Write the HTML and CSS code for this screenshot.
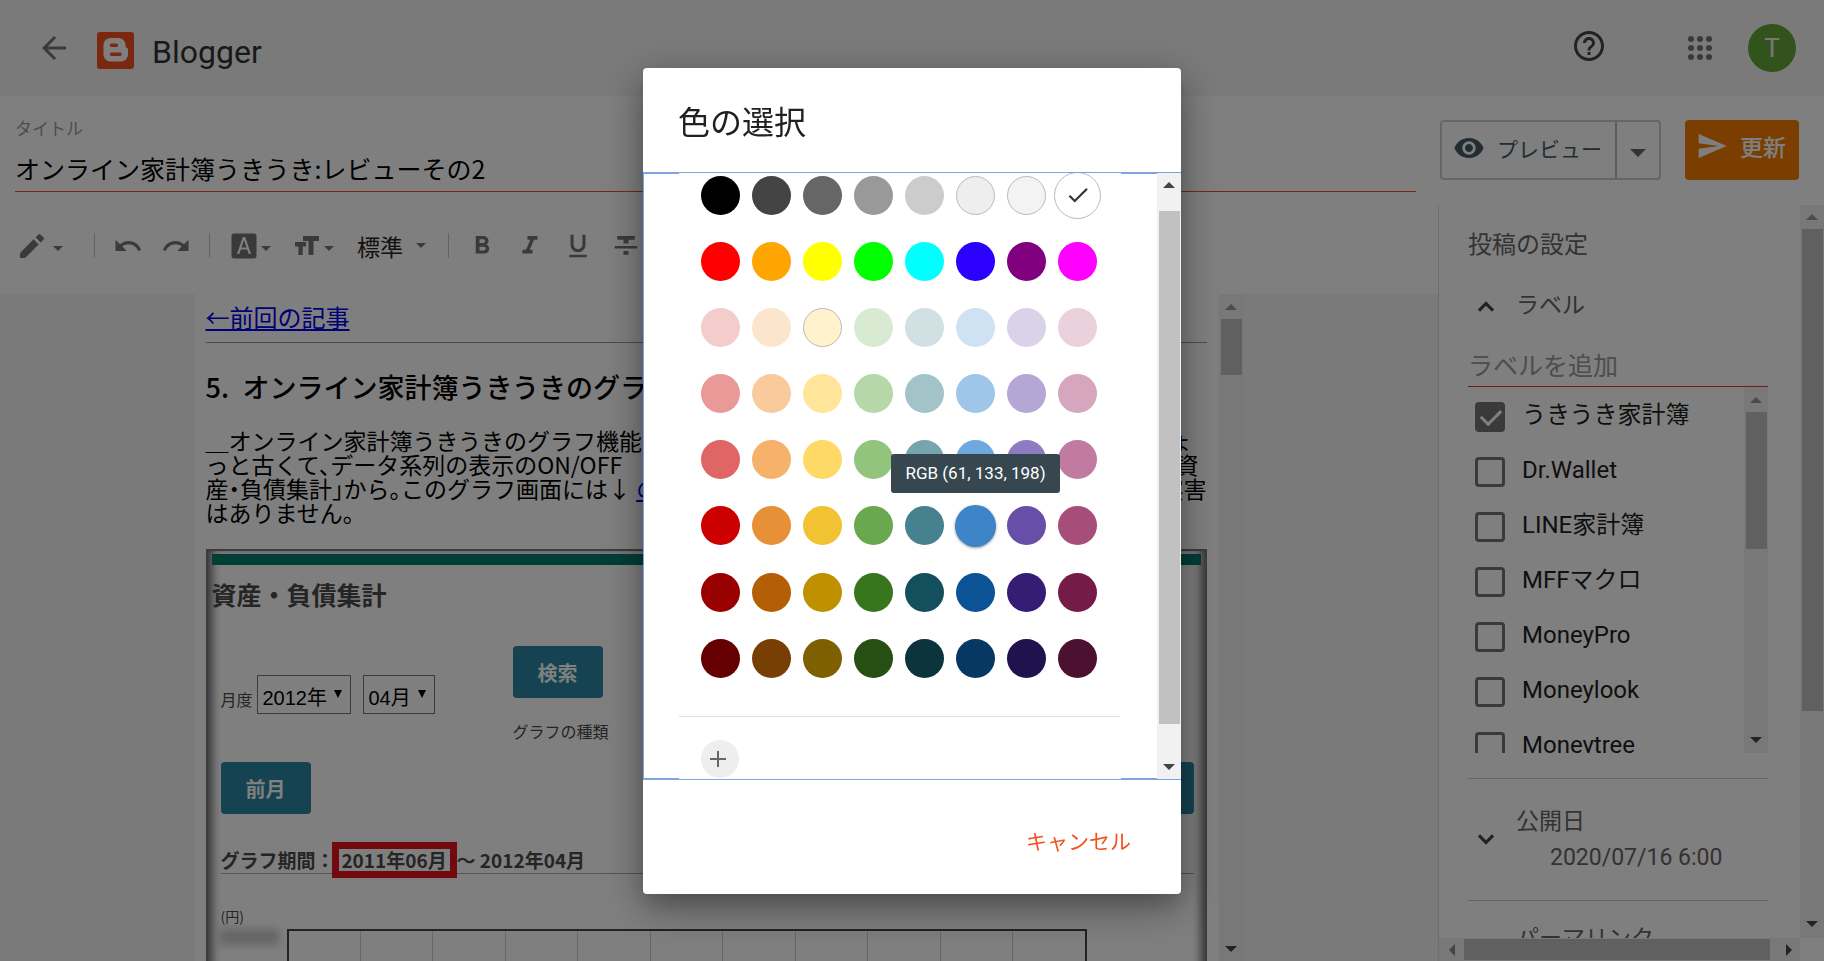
FILE: index.html
```html
<!DOCTYPE html>
<html lang="ja">
<head>
<meta charset="utf-8">
<title>Blogger</title>
<link rel="stylesheet" href="styles.css">
</head>
<body>
<div class="app">
  <header class="topbar">
    <button class="icon-btn" aria-label="戻る"><svg class="i36" viewBox="0 0 24 24"><path d="M20 11H7.83l5.59-5.59L12 4l-8 8 8 8 1.41-1.41L7.83 13H20v-2z"/></svg></button>
    <svg class="logo" viewBox="0 0 37 37"><rect width="37" height="37" rx="3" fill="#f4511e"/><path fill="#fff" fill-rule="evenodd" d="M14 6h7c4.500 0 7.500 3 7.500 7v1.500c0 1.500 2.500 1 2.500 3V22c0 4.500-3 7.500-7.500 7.500H14c-4.500 0-7.500-3-7.500-7.500v-8.500C6.500 9 9.500 6 14 6zm.5 5.500a1.700 1.700 0 0 0 0 3.500h5a1.700 1.700 0 0 0 0-3.500zm0 9a1.700 1.700 0 0 0 0 3.500H23a1.700 1.700 0 0 0 0-3.500z"/></svg>
    <span class="brand">Blogger</span>
    <nav class="topbar-end">
      <button class="icon-btn help" aria-label="ヘルプ"><svg class="i36" viewBox="0 0 24 24"><path d="M11 18h2v-2h-2v2zm1-16C6.480 2 2 6.480 2 12s4.480 10 10 10 10-4.480 10-10S17.520 2 12 2zm0 18c-4.410 0-8-3.590-8-8s3.590-8 8-8 8 3.590 8 8-3.590 8-8 8zm0-14c-2.210 0-4 1.790-4 4h2c0-1.100.9-2 2-2s2 .9 2 2c0 2-3 1.750-3 5h2c0-2.250 3-2.500 3-5 0-2.210-1.790-4-4-4z"/></svg></button>
      <button class="icon-btn apps" aria-label="アプリ"><svg class="i36" viewBox="0 0 36 36"><circle cx="9" cy="9" r="3"/><circle cx="18" cy="9" r="3"/><circle cx="27" cy="9" r="3"/><circle cx="9" cy="18" r="3"/><circle cx="18" cy="18" r="3"/><circle cx="27" cy="18" r="3"/><circle cx="9" cy="27" r="3"/><circle cx="18" cy="27" r="3"/><circle cx="27" cy="27" r="3"/></svg></button>
      <button class="avatar">T</button>
    </nav>
  </header>

  <div class="work">
    <main class="editor">
      <div class="title-field">
        <label for="title">タイトル</label>
        <input id="title" type="text" value="オンライン家計簿うきうき:レビューその2">
      </div>
      <div class="toolbar">
        <button class="drop pen" aria-label="編集モード"><svg class="i32" viewBox="0 0 24 24"><path d="M3 18.200V21h3.200c.4 0 .8-.2 1-.4L17 10.800 13.200 7 3.400 16.800c-.3.400-.4.900-.4 1.400zM20.700 7.100c.4-.4.4-1 0-1.400l-2.400-2.400a1 1 0 0 0-1.400 0L14.700 5.500l3.800 3.800z"/></svg><i class="caret"></i></button>
        <i class="sep"></i>
        <button class="tool" aria-label="元に戻す"><svg class="i30" viewBox="0 0 24 24"><path d="M12.500 8c-2.650 0-5.050.99-6.900 2.600L2 7v9h9l-3.620-3.620c1.390-1.160 3.160-1.880 5.120-1.880 3.540 0 6.550 2.310 7.600 5.500l2.370-.78C21.080 11.030 17.150 8 12.500 8z"/></svg></button>
        <button class="tool" aria-label="やり直す"><svg class="i30" viewBox="0 0 24 24"><path d="M18.400 10.600C16.550 8.990 14.150 8 11.500 8c-4.650 0-8.580 3.030-9.960 7.220L3.900 16c1.050-3.190 4.050-5.500 7.600-5.500 1.950 0 3.730.72 5.120 1.880L13 16h9V7l-3.600 3.600z"/></svg></button>
        <i class="sep"></i>
        <button class="drop" aria-label="文字の背景色"><svg class="i32" viewBox="0 0 32 32"><path fill-rule="evenodd" d="M6 3.500h20a2.500 2.500 0 0 1 2.500 2.500v20a2.500 2.500 0 0 1-2.500 2.500H6A2.500 2.500 0 0 1 3.500 26V6A2.500 2.500 0 0 1 6 3.500zM14.800 7 9 24h2.300l1.500-4.500h6.400l1.500 4.500H23L17.200 7zm1.200 3 2.600 7.500h-5.200z"/></svg><i class="caret"></i></button>
        <button class="drop" aria-label="文字サイズ"><svg class="i32" viewBox="0 0 32 32"><path d="M12 6h16v5h-5.500v14h-5V11H12zM4 12h11v4.500h-3.300V25H7.400v-8.500H4z"/></svg><i class="caret"></i></button>
        <button class="drop style"><span>標準</span><i class="caret"></i></button>
        <i class="sep"></i>
        <button class="tool" aria-label="太字"><svg class="i30" viewBox="0 0 24 24"><path d="M15.600 10.790c.97-.67 1.650-1.770 1.650-2.790 0-2.260-1.750-4-4-4H7v14h7.040c2.090 0 3.710-1.700 3.710-3.790 0-1.520-.86-2.820-2.150-3.420zM10 6.500h3c.83 0 1.500.67 1.500 1.500s-.67 1.500-1.500 1.500h-3v-3zm3.500 9H10v-3h3.500c.83 0 1.500.67 1.500 1.500s-.67 1.500-1.500 1.500z"/></svg></button>
        <button class="tool" aria-label="斜体"><svg class="i30" viewBox="0 0 24 24"><path d="M10 4v3h2.210l-3.420 8H6v3h8v-3h-2.210l3.420-8H18V4z"/></svg></button>
        <button class="tool" aria-label="下線"><svg class="i30" viewBox="0 0 24 24"><path d="M12 17c3.310 0 6-2.690 6-6V3h-2.500v8c0 1.930-1.570 3.500-3.500 3.500S8.500 12.930 8.500 11V3H6v8c0 3.310 2.690 6 6 6zm-7 2v2h14v-2H5z"/></svg></button>
        <button class="tool" aria-label="取り消し線"><svg class="i30" viewBox="0 0 24 24"><path d="M10 19h4v-3h-4v3zM5 4v3h5v3h4V7h5V4H5zM3 14h18v-2H3v2z"/></svg></button>
      </div>
      <div class="canvas">
        <article class="paper">
          <p class="prev"><a href="#">←前回の記事</a></p>
          <hr>
          <h2>5.&ensp;オンライン家計簿うきうきのグラフ</h2>
          <div class="prose">
            <div><span>＿オンライン家計簿うきうきのグラフ機能は</span><span class="line-end">ょ</span></div>
            <div><span>っと古くて、データ系列の表示のON/OFF</span><span class="line-end mid">資</span></div>
            <div><span>産・負債集計」から。このグラフ画面には↓ <a href="#">の</a></span><span>実害</span></div>
            <div><span>はありません。</span></div>
          </div>
          <figure class="capture">
            <div class="capture-bar"></div>
            <h3>資産・負債集計</h3>
            <div class="filters">
              <div class="month-row">
                <label for="year">月度</label>
                <span class="pick"><select id="year"><option>2012年</option></select></span>
                <span class="pick month"><select aria-label="月"><option>04月</option></select></span>
              </div>
              <div class="search-col">
                <button class="teal">検索</button>
                <p>グラフの種類</p>
              </div>
            </div>
            <div class="month-nav"><button class="teal">前月</button><button class="teal">翌月</button></div>
            <div class="period"><span>グラフ期間：</span><mark>2011年06月</mark><span>～ 2012年04月</span></div>
            <p class="unit">(円)</p>
            <div class="chart"><i class="smudge"></i><div class="plot"><i></i><i></i><i></i><i></i><i></i><i></i><i></i><i></i><i></i><i></i><i></i></div></div>
          </figure>
        </article>
        <div class="vscroll doc-scroll"><i class="up"></i><b></b><i class="down"></i></div>
      </div>
    </main>

    <aside class="side">
      <div class="actions">
        <div class="split">
          <button class="preview"><svg class="i32" viewBox="0 0 24 24"><path d="M12 4.500C7 4.500 2.730 7.610 1 12c1.730 4.390 6 7.500 11 7.500s9.270-3.110 11-7.500c-1.730-4.390-6-7.500-11-7.500zM12 17c-2.760 0-5-2.240-5-5s2.240-5 5-5 5 2.240 5 5-2.240 5-5 5zm0-8c-1.660 0-3 1.340-3 3s1.340 3 3 3 3-1.340 3-3-1.340-3-3-3z"/></svg><span>プレビュー</span></button>
          <button class="more" aria-label="その他"><i class="caret big"></i></button>
        </div>
        <button class="update"><svg class="i32" viewBox="0 0 24 24"><path d="M2.010 21 23 12 2.010 3 2 10l15 2-15 2z"/></svg><span>更新</span></button>
      </div>
      <div class="settings">
        <div class="settings-body">
          <h2>投稿の設定</h2>
          <button class="fold"><svg class="i28" viewBox="0 0 24 24"><path d="M12 8l-7 7 1.900 1.900L12 11.800l5.100 5.100L19 15z"/></svg><span>ラベル</span></button>
          <input class="label-input" type="text" placeholder="ラベルを追加" aria-label="ラベルを追加">
          <div class="labels">
            <div class="label-list">
              <label><input type="checkbox" checked><span>うきうき家計簿</span></label>
              <label><input type="checkbox"><span>Dr.Wallet</span></label>
              <label><input type="checkbox"><span>LINE家計簿</span></label>
              <label><input type="checkbox"><span>MFFマクロ</span></label>
              <label><input type="checkbox"><span>MoneyPro</span></label>
              <label><input type="checkbox"><span>Moneylook</span></label>
              <label><input type="checkbox"><span>Moneytree</span></label>
            </div>
            <div class="vscroll label-scroll"><i class="up"></i><b></b><i class="down"></i></div>
          </div>
          <button class="fold date"><svg class="i28" viewBox="0 0 24 24"><path d="M17.100 7.100 12 12.200 6.900 7.100 5 9l7 7 7-7z"/></svg><span>公開日<small>2020/07/16 6:00</small></span></button>
          <button class="fold permalink"><i class="i28"></i><span>パーマリンク</span></button>
        </div>
        <div class="vscroll side-scroll"><i class="up"></i><b></b><i class="down"></i></div>
        <div class="hscroll"><i class="left"></i><b></b><i class="right"></i></div>
      </div>
    </aside>
  </div>
</div>

<div class="scrim">
  <section class="dialog" role="dialog" aria-labelledby="dialog-title">
    <h1 id="dialog-title">色の選択</h1>
    <div class="dialog-body">
      <div class="palette">
        <div class="swatches" id="swatches"></div>
        <div class="custom"><button aria-label="色を追加"><svg viewBox="0 0 38 38"><path d="M16 11h2v7h7v2h-7v7h-2v-7H9v-2h7z"/></svg></button></div>
      </div>
      <div class="vscroll palette-scroll"><i class="up"></i><b></b><i class="down"></i></div>
    </div>
    <footer><button class="cancel">キャンセル</button></footer>
  </section>
</div>
<script src="app.js"></script>
</body>
</html>
```
FILE: styles.css
```css
* { box-sizing: border-box; }
body {
  margin: 0;
  font-family: Roboto, "Noto Sans CJK JP", sans-serif;
  color: #212121;
  background: #fff;
  overflow: hidden;
}
h1, h2, h3, p, figure { margin: 0; font-weight: 400; }
button {
  font: inherit;
  color: inherit;
  background: none;
  border: 0;
  padding: 0;
  display: flex;
  align-items: center;
}
svg { display: block; fill: currentColor; flex: none; }
i { display: block; flex: none; }
.i28 { width: 28px; height: 28px; }
.i30 { width: 30px; height: 30px; }
.i32 { width: 32px; height: 32px; }
.i36 { width: 36px; height: 36px; }

.app { height: 100vh; display: flex; flex-direction: column; }

/* top bar */
.topbar {
  flex: none;
  height: 96px;
  padding: 0 28px 0 36px;
  display: flex;
  align-items: center;
  background: #f5f5f5;
}
.icon-btn { color: #757575; }
.logo { width: 37px; height: 37px; margin: 4px 18px 0 25px; }
.brand { font-size: 32px; line-height: 40px; padding-top: 8px; color: #333; }
.topbar-end { margin-left: auto; display: flex; align-items: center; }
.help { color: #444; padding-bottom: 4px; margin-right: 75px; }
.apps { margin-right: 30px; }
.avatar {
  width: 48px;
  height: 48px;
  border-radius: 50%;
  justify-content: center;
  background: #64a636;
  color: #eee;
  font-size: 26px;
}

/* page split */
.work { flex: 1; min-height: 0; display: flex; }
.editor { flex: 1; min-width: 0; display: flex; flex-direction: column; }
.side { width: 386px; flex: none; display: flex; flex-direction: column; }

.title-field { padding: 21px 22px 0 15px; display: flex; flex-direction: column; }
.title-field label { font-size: 17px; line-height: 24px; color: #9a9a9a; margin-bottom: 7px; }
.title-field input {
  height: 44px;
  border: 0;
  border-bottom: 1px solid #f4511e;
  padding: 0 0 4px;
  font: 25px "Noto Sans CJK JP", sans-serif;
  color: #000;
  background: none;
  outline: none;
}

.toolbar {
  height: 102px;
  padding: 5px 16px 0;
  display: flex;
  align-items: center;
  color: #757575;
  flex: none;
}
.tool { width: 48px; height: 48px; justify-content: center; flex: none; }
.sep { width: 1px; height: 25px; background: #c4c4c4; margin: 0 9px; }
.caret { border: 5px solid transparent; border-top-color: currentColor; border-bottom: 0; }
.caret.big { border-width: 8px 8px 0; }
.drop { gap: 1px; padding: 0 11px 0 9px; flex: none; }
.drop .caret { margin-top: 6px; }
.drop.pen { gap: 5px; padding: 0 22px 0 0; }
.drop.style { gap: 13px; padding: 0 13px 0 12px; }
.drop.style span { font-size: 23px; color: #222; }
.drop.style .caret { margin-top: 0; }

/* document */
.canvas { flex: 1; min-height: 0; display: flex; justify-content: center; background: #f5f5f5; overflow: hidden; }
.paper {
  width: 1024px;
  padding: 10px 12px 0 11px;
  background: #fff;
  overflow: hidden;
  font-family: "Noto Sans CJK JP", sans-serif;
  color: #000;
}
.paper a { color: #0000ee; }
.prev { font-size: 24px; line-height: 26px; }
.paper hr { border: 0; height: 1px; background: #999; margin: 12px 0 28px; }
.paper h2 { font-size: 27px; line-height: 32px; font-weight: 500; margin-bottom: 25px; white-space: nowrap; }
.prose { font-size: 23px; line-height: 24px; margin-bottom: 25px; font-feature-settings: "halt"; }
.prose div { display: flex; justify-content: space-between; white-space: nowrap; }
.prose .line-end { padding-right: 14px; }
.prose .mid { padding-right: 8px; }

.capture {
  height: 700px;
  padding: 3px 6px 0;
  border-top: 2px solid #777;
  background: #fff;
  color: #4a4a4a;
  box-shadow: inset 11px 0 10px -5px #666, inset -11px 0 10px -5px #666;
}
.capture-bar { height: 11px; background: #007c70; margin-bottom: 11px; }
.capture h3 { font-size: 25px; line-height: 36px; font-weight: 700; margin-bottom: 34px; }
.filters, .month-nav, .period, .unit { margin-left: 9px; }
.filters { display: flex; margin-bottom: 19px; }
.month-row { width: 292px; padding-top: 29px; display: flex; align-items: flex-start; }
.month-row label { width: 36px; font-size: 16px; line-height: 48px; }
.pick { position: relative; width: 94px; margin-right: 12px; }
.pick.month { width: 72px; margin-right: 0; }
.pick select {
  width: 100%;
  height: 39px;
  appearance: none;
  border: 1px solid #777;
  border-radius: 0;
  background: none;
  padding: 6px 0 0 5px;
  font: 20px "Liberation Sans", "Noto Sans CJK JP", sans-serif;
  color: #000;
}
.pick::after {
  content: "";
  position: absolute;
  top: 15px;
  right: 9px;
  border: 4px solid transparent;
  border-top: 8px solid #000;
  border-bottom: 0;
}
.teal {
  width: 90px;
  height: 52px;
  justify-content: center;
  border-radius: 4px;
  background: #2a86a4;
  color: #fff;
  font-size: 20px;
  font-weight: 700;
}
.search-col p { font-size: 16px; line-height: 24px; margin-top: 21px; }
.month-nav { display: flex; justify-content: space-between; margin: 0 7px 28px 9px; }
.period {
  height: 32px;
  margin-right: 7px;
  border-bottom: 1px solid #aaa;
  display: flex;
  align-items: flex-start;
  font-size: 19px;
  line-height: 36px;
  font-weight: 700;
}
.period mark {
  flex: none;
  width: 125px;
  margin-left: -3px;
  border: 7px solid #e4131d;
  line-height: 22px;
  text-align: center;
  background: none;
  color: inherit;
}
.unit { font-size: 14px; line-height: 16px; margin-top: 34px; margin-bottom: 5px; }
.chart { display: flex; }
.smudge { width: 60px; height: 16px; margin: 0 8px 0 7px; background: #ccc; filter: blur(4px); }
.plot {
  width: 800px;
  height: 300px;
  border: 2px solid #444;
  display: flex;
}
.plot i { flex: 1; border-right: 1px solid #d0d0d0; }
.plot i:last-child { border: 0; }

/* scroll bars */
.vscroll { width: 24px; flex: none; display: flex; flex-direction: column; align-items: center; background: #f1f1f1; color: #444; }
.vscroll b { width: 21px; background: #c1c1c1; }
.vscroll .up, .vscroll .down { border: 6px solid transparent; }
.vscroll .up { border-top: 0; border-bottom-color: #999; }
.vscroll .down { border-bottom: 0; border-top-color: currentColor; margin-top: auto; }
.doc-scroll { width: 25px; padding: 10px 0 9px; }
.doc-scroll b { height: 56px; margin-top: 9px; }
.side-scroll { padding: 9px 0 11px; }
.side-scroll b { height: 482px; margin-top: 9px; }
.label-scroll { padding: 10px 0; }
.label-scroll b { height: 137px; margin-top: 9px; }
.palette-scroll { padding: 9px 0 9px; }
.palette-scroll .up { border-bottom-color: #444; }
.palette-scroll b { flex: 1; margin: 23px 0 40px; }
.hscroll { height: 23px; display: flex; align-items: center; background: #f1f1f1; padding: 0 8px 0 10px; }
.hscroll b { flex: 1; height: 21px; background: #c1c1c1; margin: 0 16px 0 9px; }
.hscroll i { border: 6px solid transparent; }
.hscroll .left { border-left: 0; border-right-color: #888; }
.hscroll .right { border-right: 0; border-left-color: #444; }

/* right column */
.actions { height: 109px; flex: none; padding: 24px 25px 25px 2px; display: flex; justify-content: space-between; }
.split { display: flex; height: 60px; border: 2px solid #ccc; border-radius: 4px; color: #455a64; }
.preview { width: 173px; padding: 0 0 4px 11px; gap: 12px; font-size: 21px; }
.more { width: 44px; justify-content: center; border-left: 2px solid #bbb; color: #666; padding-top: 6px; }
.update {
  width: 114px;
  height: 60px;
  padding: 0 0 8px 11px;
  gap: 12px;
  border-radius: 4px;
  background: #f57c00;
  color: #fff;
  font-size: 23px;
  font-weight: 500;
}
.settings {
  flex: 1;
  min-height: 0;
  display: grid;
  grid-template: minmax(0, 1fr) 23px / minmax(0, 1fr) 24px;
  border-left: 1px solid #ddd;
  background: #fff;
}
.side-scroll { grid-column: 2; grid-row: 1; }
.settings-body { overflow: hidden; padding: 22px 32px 0 29px; }
.settings h2 { font-size: 24px; line-height: 36px; color: #666; margin-bottom: 25px; }
.fold { padding-left: 4px; gap: 16px; font-size: 23px; line-height: 36px; color: #666; text-align: left; }
.fold svg { color: #444; }
.label-input {
  width: 100%;
  height: 41px;
  margin-top: 22px;
  border: 0;
  border-bottom: 1px solid #e53935;
  padding: 0;
  font: 25px Roboto, "Noto Sans CJK JP", sans-serif;
  background: none;
  outline: none;
}
.label-input::placeholder { color: #9a9a9a; opacity: 1; }
.labels { height: 366px; display: flex; overflow: hidden; margin-bottom: 25px; }
.label-list { flex: 1; padding: 2px 0 0 7px; }
.label-list label { height: 55px; display: flex; align-items: center; gap: 17px; font-size: 24px; line-height: 36px; }
.label-list span { padding-bottom: 4px; }
.label-list input {
  appearance: none;
  position: relative;
  flex: none;
  width: 30px;
  height: 30px;
  margin: 0;
  border: 3px solid #757575;
  border-radius: 4px;
}
.label-list input:checked { background: #757575; }
.label-list input:checked::after {
  content: "";
  position: absolute;
  left: 7px;
  top: 0;
  width: 9px;
  height: 17px;
  border: solid #fff;
  border-width: 0 3px 3px 0;
  transform: rotate(45deg);
}
.fold.date { width: 100%; height: 123px; border: 1px solid #c8c8c8; border-width: 1px 0; }
.fold small { display: block; font-size: 23px; padding-left: 34px; }
.permalink { padding-top: 20px; }

/* colour dialog */
.scrim {
  position: fixed;
  z-index: 10;
  inset: 0;
  display: flex;
  align-items: center;
  justify-content: center;
  background: rgba(0, 0, 0, .5);
}
.dialog {
  width: 538px;
  background: #fff;
  border-radius: 4px;
  box-shadow: 0 12px 42px rgba(0, 0, 0, .4), 0 10px 20px rgba(0, 0, 0, .1);
}
.dialog h1 { font-size: 32px; line-height: 48px; padding: 31px 35px 25px; }
.dialog-body { height: 608px; display: flex; border: 1px solid #7fa3e0; border-right: 0; }
.palette {
  flex: 1;
  overflow: hidden;
  padding-top: 3px;
  background:
    linear-gradient(#7fa3e0, #7fa3e0) left top / 35px 1px no-repeat,
    linear-gradient(#7fa3e0, #7fa3e0) right top / 36px 1px no-repeat,
    linear-gradient(#7fa3e0, #7fa3e0) left bottom / 35px 1px no-repeat,
    linear-gradient(#7fa3e0, #7fa3e0) right bottom / 36px 1px no-repeat;
}
.swatches { display: grid; grid-template-columns: repeat(8, 39px); gap: 27px 12px; margin: 0 0 38px 57px; }
.swatch { position: relative; height: 39px; border-radius: 50%; justify-content: center; }
.swatch.light { border: 1px solid #bbb; }
.swatch.selected { margin: -4px; height: 47px; border: 1px solid #bbb; }
.swatch.selected svg { width: 26px; height: 26px; color: #333; }
.swatch.hover { margin: -1px; height: 42px; box-shadow: 0 1px 3px rgba(0, 0, 0, .4); }
.tip {
  position: absolute;
  z-index: 1;
  bottom: calc(100% + 12px);
  padding: 0 14px;
  border-radius: 3px;
  background: #37474f;
  color: #fff;
  font-size: 17px;
  line-height: 39px;
  white-space: nowrap;
}
.custom { margin: 0 37px 0 35px; padding: 23px 22px 0; border-top: 1px solid #e0e0e0; }
.custom button { width: 38px; height: 38px; border-radius: 50%; background: #eee; color: #666; }
.dialog footer { padding: 44px 50px 34px; display: flex; justify-content: flex-end; }
.cancel { font-size: 21px; line-height: 36px; color: #f4511e; }
```
FILE: app.js
```js
const palette = [
  '000000 444444 666666 999999 cccccc eeeeee f3f3f3 ffffff',
  'ff0000 ffa500 ffff00 00ff00 00ffff 2b00fe 800080 ff00ff',
  'f4cccc fce5cd fff2cc d9ead3 d0e0e3 cfe2f3 d9d2e9 ead1dc',
  'ea9999 f9cb9c ffe599 b6d7a8 a2c4c9 9fc5e8 b4a7d6 d5a6bd',
  'e06666 f6b26b ffd966 93c47d 76a5af 6fa8dc 8e7cc3 c27ba0',
  'cc0000 e69138 f1c232 6aa84f 45818e 3d85c6 674ea7 a64d79',
  '990000 b45f06 bf9000 38761d 134f5c 0b5394 351c75 741b47',
  '660000 783f04 7f6000 274e13 0c343d 073763 20124d 4c1130'
];
const outlined = ['eeeeee', 'f3f3f3', 'fff2cc'];
const grid = document.getElementById('swatches');

palette.join(' ').split(' ').forEach(hex => {
  const button = document.createElement('button');
  button.className = 'swatch';
  button.style.backgroundColor = '#' + hex;
  button.setAttribute('aria-label', '#' + hex);
  if (outlined.includes(hex)) button.classList.add('light');
  if (hex === 'ffffff') {
    button.classList.add('selected');
    button.innerHTML = '<svg viewBox="0 0 24 24"><path d="M9 16.170 4.830 12l-1.420 1.410L9 19 21 7l-1.410-1.410z"/></svg>';
  }
  if (hex === '3d85c6') {
    button.classList.add('hover');
    button.innerHTML = '<span class="tip">RGB (61, 133, 198)</span>';
  }
  grid.append(button);
});
```
